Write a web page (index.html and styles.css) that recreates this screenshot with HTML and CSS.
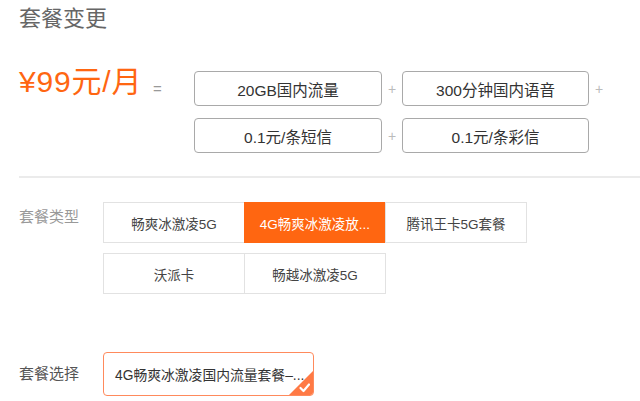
FILE: index.html
```html
<!DOCTYPE html>
<html lang="zh-CN">
<head>
<meta charset="utf-8">
<title>套餐变更</title>
<link rel="stylesheet" href="styles.css">
</head>
<body>
<div class="page">
  <h1 class="title">套餐变更</h1>

  <div class="summary">
    <div class="price">¥99元/月</div>
    <div class="eq">=</div>
    <div class="items">
      <div class="item">20GB国内流量</div>
      <div class="plus">+</div>
      <div class="item">300分钟国内语音</div>
      <div class="plus">+</div>
      <div class="item">0.1元/条短信</div>
      <div class="plus">+</div>
      <div class="item">0.1元/条彩信</div>
      <div class="plus"></div>
    </div>
  </div>

  <div class="divider"></div>

  <div class="field">
    <div class="label muted">套餐类型</div>
    <div class="types">
      <div class="type-row">
        <div class="type">畅爽冰激凌5G</div>
        <div class="type active">4G畅爽冰激凌放...</div>
        <div class="type">腾讯王卡5G套餐</div>
      </div>
      <div class="type-row">
        <div class="type">沃派卡</div>
        <div class="type">畅越冰激凌5G</div>
      </div>
    </div>
  </div>

  <div class="field select-field">
    <div class="label">套餐选择</div>
    <div class="select">
      <span class="select-text">4G畅爽冰激凌国内流量套餐–...</span>
      <svg class="check" width="26" height="26" viewBox="0 0 26 26">
        <path d="M26 0 L26 22 Q26 26 22 26 L0 26 Z" fill="#ff7a45"/>
        <path d="M12.5 18 L15.5 21 L21 14.5" fill="none" stroke="#fff" stroke-width="2.2" stroke-linecap="round" stroke-linejoin="round"/>
      </svg>
    </div>
  </div>
</div>
</body>
</html>
```

FILE: styles.css
```css
html, body {
  margin: 0;
  padding: 0;
  background: #fff;
}

body {
  font-family: "Liberation Sans", "Noto Sans CJK SC", sans-serif;
  color: #333;
}

.page {
  padding-left: 19px;
  width: 621px;
  overflow: hidden;
}

.title {
  margin: 4px 0 0 0;
  font-size: 22px;
  line-height: 30px;
  font-weight: normal;
  color: #666;
}

.summary {
  display: flex;
  align-items: flex-start;
  margin-top: 37px;
}

.price {
  width: 134px;
  margin-top: -6px;
  font-size: 30px;
  line-height: 34px;
  letter-spacing: 0.8px;
  color: #ff6611;
  white-space: nowrap;
}

.eq {
  width: 41px;
  font-size: 15px;
  line-height: 35px;
  color: #999;
}

.items {
  display: grid;
  grid-template-columns: 188px 20px 187px 20px;
  grid-auto-rows: 35px;
  row-gap: 12px;
}

.item {
  box-sizing: border-box;
  border: 1px solid #a9a9a9;
  border-radius: 4px;
  display: flex;
  align-items: center;
  justify-content: center;
  font-size: 15.5px;
  color: #333;
  white-space: nowrap;
}

.plus {
  display: flex;
  align-items: center;
  justify-content: center;
  font-size: 14px;
  color: #bbb;
}

.divider {
  height: 2px;
  background: #ebebeb;
  margin-top: 23px;
}

.field {
  display: flex;
  align-items: flex-start;
  margin-top: 24px;
}

.label {
  width: 84px;
  flex: none;
  margin-top: 5px;
  font-size: 15px;
  line-height: 20px;
  color: #555;
}

.label.muted {
  color: #999;
}

.types {
  display: flex;
  flex-direction: column;
  gap: 10px;
}

.type-row {
  display: flex;
}

.type {
  box-sizing: border-box;
  width: 142px;
  height: 41px;
  border: 1px solid #e2e2e2;
  display: flex;
  align-items: center;
  justify-content: center;
  font-size: 13.5px;
  color: #444;
  white-space: nowrap;
  background: #fff;
}

.type + .type {
  margin-left: -1px;
}

.type.active {
  background: #ff6611;
  border-color: #ff6611;
  color: #fff;
}

.select-field {
  margin-top: 58px;
  align-items: center;
}

.select-field .label {
  margin-top: 0;
}

.select {
  position: relative;
  box-sizing: border-box;
  width: 211px;
  height: 44px;
  border: 1px solid #ff8a5c;
  border-radius: 4px;
  display: flex;
  align-items: center;
  padding-left: 11px;
  overflow: hidden;
}

.select-text {
  font-size: 13.8px;
  color: #333;
  white-space: nowrap;
}

.check {
  position: absolute;
  right: -1px;
  bottom: -1px;
  display: block;
}
```
